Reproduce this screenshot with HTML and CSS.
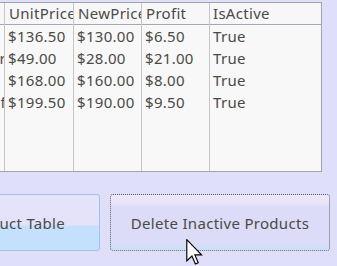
FILE: index.html
```html
<!DOCTYPE html>
<html>
<head>
  <title>Products</title>
  <link rel="stylesheet" href="styles.css">
</head>
<body>
  <div class="grid">
    <div class="col col-name">
      <div class="head short">Name</div>
      <div class="cell short">Desk</div>
      <div class="cell">Chair</div>
      <div class="cell short">Sofa</div>
      <div class="cell">Shelf</div>
    </div>
    <div class="col col-unit">
      <div class="head">UnitPrice</div>
      <div class="cell">$136.50</div>
      <div class="cell">$49.00</div>
      <div class="cell">$168.00</div>
      <div class="cell">$199.50</div>
    </div>
    <div class="col col-new">
      <div class="head">NewPrice</div>
      <div class="cell">$130.00</div>
      <div class="cell">$28.00</div>
      <div class="cell">$160.00</div>
      <div class="cell">$190.00</div>
    </div>
    <div class="col col-profit">
      <div class="head">Profit</div>
      <div class="cell">$6.50</div>
      <div class="cell">$21.00</div>
      <div class="cell">$8.00</div>
      <div class="cell">$9.50</div>
    </div>
    <div class="col col-active">
      <div class="head">IsActive</div>
      <div class="cell">True</div>
      <div class="cell">True</div>
      <div class="cell">True</div>
      <div class="cell">True</div>
    </div>
  </div>

  <div class="buttons">
    <button class="btn btn-load">Load Product Table</button>
    <button class="btn btn-delete">Delete Inactive Products</button>
  </div>

  <svg class="cursor" width="17" height="27" viewBox="0 0 13 21">
    <path d="M0.5 0.5 L0.5 17 L4.5 13.2 L7.2 19.5 L9.4 18.5 L6.8 12.4 L12 12.4 Z" fill="#fff" stroke="#000" stroke-width="0.9" stroke-linejoin="miter"/>
  </svg>
</body>
</html>
```

FILE: styles.css
```css
body {
  margin: 0;
  background-color: #dfdff9;
  font-family: "Noto Sans", "Open Sans", sans-serif;
  font-size: 15px;
  letter-spacing: 0.3px;
  color: #4a4a46;
  overflow: hidden;
  position: relative;
  height: 266px;
}
.grid {
  display: flex;
  box-sizing: border-box;
  width: 382px;
  height: 170px;
  margin: 2px 0 0 -60px;
  border: 1px solid #a4a4a8;
  background-color: #f8f8f8;
}
.col {
  box-sizing: border-box;
  border-right: 1px solid #c6c6c6;
  overflow: hidden;
}
.col-name { width: 64px; }
.col-unit { width: 69px; }
.col-new { width: 68px; }
.col-profit { width: 68px; }
.col-active { flex: 1; border-right: none; }
.head {
  height: 21px;
  line-height: 21px;
  padding-left: 4px;
  white-space: nowrap;
  background-color: #f7f7f9;
  border-bottom: 1px solid #a8a8b0;
}
.cell {
  height: 22px;
  line-height: 22px;
  padding-left: 3px;
  white-space: nowrap;
}
.col-name .head,
.col-name .cell {
  text-align: right;
  padding: 0;
  margin-right: -2px;
}
.col-name .short {
  padding-right: 14px;
}
.col-active .head,
.col-active .cell {
  padding-left: 3px;
}
.buttons {
  display: flex;
  gap: 10px;
  margin: 22px 0 0 -110px;
}
.btn {
  box-sizing: border-box;
  height: 57px;
  font-family: "Noto Sans", "Open Sans", sans-serif;
  font-size: 15px;
  letter-spacing: 0.3px;
  color: #4a4a46;
  border-radius: 3px;
  padding: 0;
}
.btn-load {
  width: 210px;
  border: 1px solid #9cc4ee;
  background: linear-gradient(#e6e4fa 0, #e4e2fa 55%, #c4e0fc 56%, #c4e0fc 100%);
}
.btn-delete {
  width: 220px;
  border: 1px dotted #5c6070;
  background: linear-gradient(#f0e8f6 0, #eae4f8 14%, #dcdcf8 22%, #dcdcf8 88%, #cde0fa 94%, #cde0fa 100%);
}
.cursor {
  position: absolute;
  left: 186px;
  top: 239px;
}
```
